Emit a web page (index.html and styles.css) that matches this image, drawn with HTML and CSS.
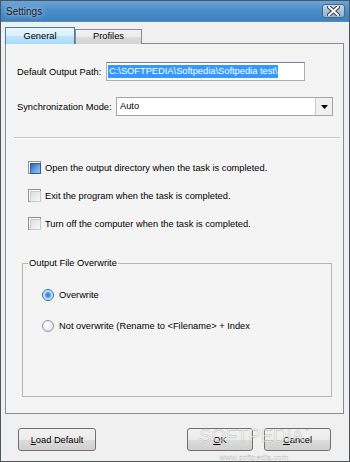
FILE: index.html
```html
<!DOCTYPE html>
<html lang="en">
<head>
  <meta charset="UTF-8" />
  <title>Settings</title>
  <link rel="stylesheet" href="styles.css">
</head>
<body>
  <div class="window">
    <div class="titlebar">
      <span class="title">Settings</span>
      <button class="close-btn" aria-label="Close">
        <svg width="13" height="10" viewBox="0 0 13 10">
          <path d="M2 1 L11 9 M11 1 L2 9" stroke="#3a3f48" stroke-width="4" stroke-linecap="square" />
          <path d="M2 1 L11 9 M11 1 L2 9" stroke="#fff" stroke-width="2" stroke-linecap="square" />
        </svg>
      </button>
    </div>

    <div class="client">
      <div class="tabs">
        <div class="tab active">General</div>
        <div class="tab">Profiles</div>
      </div>

      <div class="panel">
        <div class="row path-row">
          <label class="row-label">Default Output Path:</label>
          <div class="textbox"><span class="selected">C:\SOFTPEDIA\Softpedia\Softpedia test\</span></div>
        </div>

        <div class="row sync-row">
          <label class="row-label">Synchronization Mode:</label>
          <div class="combo">
            <span class="combo-value">Auto</span>
            <span class="combo-btn">
              <svg width="7" height="4" viewBox="0 0 7 4"><path d="M0 0 H7 L3.5 4 Z" fill="#000" /></svg>
            </span>
          </div>
        </div>

        <div class="separator"></div>

        <ul class="options">
          <li><span class="check checked"></span>Open the output directory when the task is completed.</li>
          <li><span class="check"></span>Exit the program when the task is completed.</li>
          <li><span class="check"></span>Turn off the computer when the task is completed.</li>
        </ul>

        <fieldset class="group">
          <legend>Output File Overwrite</legend>
          <div class="radio-row first"><span class="radio checked"></span>Overwrite</div>
          <div class="radio-row"><span class="radio"></span>Not overwrite (Rename to &lt;Filename&gt; + Index</div>
        </fieldset>
      </div>

      <div class="buttons">
        <button class="btn btn-load"><u>L</u>oad Default</button>
        <button class="btn btn-ok"><u>O</u>K</button>
        <button class="btn btn-cancel"><u>C</u>ancel</button>
      </div>
    </div>

    <!-- site watermark over the dialog -->
    <div class="watermark">
      <span class="wm-big">SOFTPEDIA<sup>™</sup></span>
      <span class="wm-small">www.softpedia.com</span>
    </div>
  </div>
</body>
</html>
```

FILE: styles.css
```css
* {
  margin: 0;
  padding: 0;
  box-sizing: border-box;
}

body {
  background: #f0f0f0;
  font-family: "Liberation Sans", Arial, sans-serif;
  font-size: 9.3px;
  color: #000;
}

/* Window frame */
.window {
  position: relative;
  width: 350px;
  height: 462px;
  border: 1px solid #4b5560;
  background: #f0f0f0;
  overflow: hidden;
}

.titlebar {
  height: 21px;
  display: flex;
  align-items: center;
  justify-content: space-between;
  padding: 0 4px 0 5px;
  background: linear-gradient(#6aa5d9, #4b8fcb 45%, #3d80bf);
  border-bottom: 1px solid #5c8cb8;
}

.title {
  font-size: 10px;
  color: #1a1a1a;
  text-shadow: 0 0 4px rgba(255, 255, 255, 0.7), 0 0 8px rgba(255, 255, 255, 0.5);
}

.close-btn {
  width: 23px;
  height: 14px;
  display: flex;
  align-items: center;
  justify-content: center;
  border: 1px solid #46678a;
  border-radius: 3px;
  background: linear-gradient(#c7d8e9, #a8c2dc 50%, #94b3d2);
}

/* Client area */
.client {
  padding: 5px 5px 0 4px;
}

.tabs {
  position: relative;
  z-index: 1;
  display: flex;
  align-items: flex-end;
  height: 17px;
  margin-bottom: -1px;
}

.tab {
  height: 15px;
  width: 67px;
  border: 1px solid #898c95;
  border-bottom: none;
  background: linear-gradient(#f3f3f3, #ebebeb 50%, #dcdcdc 51%, #d2d2d2);
  text-align: center;
  line-height: 13px;
}

.tab.active {
  width: 70px;
  height: 17px;
  line-height: 16px;
  border-color: #3c7fb1;
  background: linear-gradient(#eaf6fd, #d9f0fc 50%, #bee6fd 51%, #a7d9f5);
}

.panel {
  height: 371px;
  border: 1px solid #898c95;
  background: #f4f4f4;
}

/* Form rows */
.row {
  display: flex;
  align-items: center;
  padding-left: 11px;
  height: 19px;
}

.path-row {
  margin-top: 18px;
}

.sync-row {
  margin-top: 16px;
}

.path-row .row-label {
  width: 89px;
}

.sync-row .row-label {
  width: 99px;
}

.textbox {
  width: 199px;
  height: 19px;
  border: 1px solid #abadb3;
  border-top-color: #7b7f87;
  background: #fff;
  padding: 2px 1px;
  display: flex;
  align-items: center;
}

.selected {
  background: #3399ff;
  color: #fff;
  padding: 0 1px;
  line-height: 13px;
  white-space: nowrap;
}

.combo {
  width: 217px;
  height: 19px;
  display: flex;
  border: 1px solid #a5a5a5;
  background: #fff;
}

.combo-value {
  flex: 1;
  padding-left: 3px;
  line-height: 17px;
}

.combo-btn {
  width: 17px;
  display: flex;
  align-items: center;
  justify-content: center;
  border-left: 1px solid #c8c8c8;
  background: #f0f0f0;
}

.separator {
  margin: 21px 3px 0 8px;
  border-top: 1px solid #c6c6c6;
  border-bottom: 1px solid #fff;
}

/* Check boxes */
.options {
  list-style: none;
  margin-top: 22px;
  padding-left: 22px;
}

.options li {
  display: flex;
  align-items: center;
  height: 13px;
  gap: 4px;
  margin-bottom: 15px;
}

.check {
  width: 13px;
  height: 13px;
  border: 1px solid #8f8f8f;
  background: #fff;
  padding: 1px;
}

.check::before {
  content: "";
  display: block;
  width: 100%;
  height: 100%;
  border: 1px solid #c7cbd1;
  background: linear-gradient(135deg, #dcdfe4, #f7f8f9);
}

.check.checked::before {
  border-color: #2c5e95;
  background: linear-gradient(135deg, #2a65b0, #6ea6e6 60%, #9cc6f2);
}

/* Group box */
.group {
  margin: 28px 0 0 16px;
  width: 310px;
  height: 139px;
  border: 1px solid #b5b5b5;
  padding: 0;
}

.group legend {
  margin-left: 5px;
  padding: 0 1px;
  line-height: 11px;
}

.radio-row {
  display: flex;
  align-items: center;
  gap: 5px;
  height: 13px;
  margin: 18px 0 0 19px;
}

.radio-row.first {
  margin-top: 19px;
}

.radio {
  width: 12px;
  height: 12px;
  border-radius: 50%;
  border: 1px solid #8f949a;
  background: radial-gradient(circle at 40% 35%, #fff, #e4e7ec 70%, #cfd4da);
}

.radio.checked {
  border-color: #2f6aa3;
  background: radial-gradient(circle, #2f7ad0 0, #5fa2e6 2.5px, #b5d5f3 3.5px, #e9f2fb 5px);
}

/* Bottom buttons */
.buttons {
  display: flex;
  margin-top: 14px;
  padding: 0 13px;
}

.btn {
  height: 23px;
  border: 1px solid #707070;
  border-radius: 3px;
  background: linear-gradient(#f2f2f2, #ebebeb 50%, #dddddd 51%, #cfcfcf);
  font-family: inherit;
  font-size: 9.3px;
  color: #000;
}

.btn-load {
  width: 78px;
}

.btn-ok {
  width: 66px;
  margin-left: auto;
}

.btn-cancel {
  width: 67px;
  margin-left: 11px;
}

/* Watermark */
.watermark {
  position: absolute;
  left: 197px;
  top: 419px;
  width: 112px;
  display: flex;
  flex-direction: column;
  align-items: center;
  pointer-events: none;
}

.wm-big {
  font-size: 18.5px;
  color: rgba(255, 255, 255, 0.6);
  -webkit-text-stroke: 0.6px rgba(140, 140, 140, 0.45);
  line-height: 20px;
  white-space: nowrap;
}

.wm-big sup {
  font-size: 5px;
  vertical-align: 10px;
  -webkit-text-stroke: 0;
  color: rgba(140, 140, 140, 0.6);
}

.wm-small {
  font-size: 8px;
  color: rgba(255, 255, 255, 0.6);
  -webkit-text-stroke: 0.3px rgba(130, 130, 130, 0.5);
  margin-top: 7px;
  line-height: 9px;
}
```
